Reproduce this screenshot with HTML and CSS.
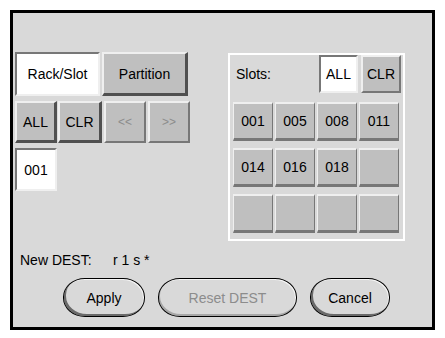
FILE: index.html
```html
<!DOCTYPE html>
<html lang="en">

<head>
    <meta charset="UTF-8" />
    <title>DEST Selection</title>
    <link rel="stylesheet" href="styles.css">
</head>

<body>

    <div class="frame">
        <div class="main">

            <div class="left">
                <div class="row">
                    <button class="btn sel wide">Rack/Slot</button>
                    <button class="btn strong wide2">Partition</button>
                </div>
                <div class="row row2">
                    <button class="btn strong sq">ALL</button>
                    <button class="btn strong sq2">CLR</button>
                    <button class="btn dim sq">&lt;&lt;</button>
                    <button class="btn dim sq">&gt;&gt;</button>
                </div>
                <div class="row row3">
                    <button class="btn sel rack">001</button>
                </div>
            </div>

            <div class="panel">
                <div class="panel-head">
                    <span class="slots-label">Slots:</span>
                    <button class="btn sel cell-h">ALL</button>
                    <button class="btn cell-h">CLR</button>
                </div>
                <div class="slot-grid">
                    <button class="btn cell">001</button>
                    <button class="btn cell">005</button>
                    <button class="btn cell">008</button>
                    <button class="btn cell">011</button>
                    <button class="btn cell">014</button>
                    <button class="btn cell">016</button>
                    <button class="btn cell">018</button>
                    <button class="btn cell"></button>
                    <button class="btn cell"></button>
                    <button class="btn cell"></button>
                    <button class="btn cell"></button>
                    <button class="btn cell"></button>
                </div>
            </div>

        </div>

        <div class="dest">
            <span class="dest-label">New DEST:</span>
            <span class="dest-value">r 1 s *</span>
        </div>

        <div class="actions">
            <button class="pill apply">Apply</button>
            <button class="pill reset" disabled>Reset DEST</button>
            <button class="pill cancel">Cancel</button>
        </div>
    </div>

</body>

</html>
```

FILE: styles.css
```css
:root {
    --bg: #d9d9d9;
    --face: #bfbfbf;
    --hi: #efefef;
    --lo: #777777;
    --lo-strong: #505050;
}

* {
    box-sizing: border-box
}

body {
    margin: 0;
    background: #fff;
    font-family: "Liberation Sans", Arial, sans-serif;
    font-size: 14px;
    color: #000;
}

.frame {
    margin: 10px;
    width: 425px;
    height: 320px;
    border: 3px solid #000;
    background: var(--bg);
    padding: 39px 0 0 2px;
}

.main {
    display: flex;
    align-items: flex-start;
}

.left {
    width: 213px;
}

.row {
    display: flex;
    gap: 1px;
}

.row2 {
    margin-top: 5px;
}

.row3 {
    margin-top: 5px;
}

/* ---------- motif-ish buttons ---------- */
.btn {
    font: inherit;
    color: #000;
    background: var(--face);
    border-style: solid;
    border-width: 2px;
    border-color: var(--hi) var(--lo) var(--lo) var(--hi);
    padding: 0;
    margin: 0;
}

.btn.strong {
    border-width: 2px 3px 3px 2px;
    border-color: var(--hi) var(--lo-strong) var(--lo-strong) var(--hi);
}

.btn.sel {
    background: #fff;
    border-color: var(--lo) var(--hi) var(--hi) var(--lo);
}

.btn.dim {
    color: #8c8c8c;
    font-size: 12px;
}

.wide {
    width: 85px;
    height: 44px;
}

.wide2 {
    width: 86px;
    height: 44px;
    margin-left: 1px;
}

.sq {
    width: 42px;
    height: 42px;
}

.sq2 {
    width: 44px;
    height: 42px;
}

.row2 .dim {
    margin-left: 1px;
}

.rack {
    width: 42px;
    height: 43px;
}

/* ---------- slots panel ---------- */
.panel {
    width: 177px;
    height: 188px;
    margin-top: 1px;
    border: 2px solid #fff;
    padding: 0 0 0 3px;
}

.panel-head {
    display: flex;
    align-items: center;
    gap: 3px;
    height: 38px;
    padding-right: 2px;
}

.slots-label {
    margin-left: 3px;
    flex: 1;
}

.cell-h {
    width: 40px;
    height: 38px;
}

.panel-head .btn.sel {
    width: 39px;
}

.slot-grid {
    display: grid;
    grid-template-columns: repeat(4, 40px);
    grid-auto-rows: 39px;
    column-gap: 2px;
    row-gap: 7px;
    margin-top: 9px;
}

.cell {
    border-width: 2px 1px 3px 1px;
    border-color: var(--hi) var(--lo) var(--lo) var(--hi);
}

/* ---------- bottom ---------- */
.dest {
    display: flex;
    margin: 11px 0 0 5px;
    height: 16px;
    align-items: center;
}

.dest-label {
    width: 93px;
}

.actions {
    display: flex;
    margin: 10px 0 0 48px;
    gap: 13px;
}

.pill {
    font: inherit;
    height: 39px;
    border: 1px solid #000;
    border-radius: 22px / 19px;
    background: var(--bg);
    color: #000;
    box-shadow: inset 2px -2px 0 #6a6a6a, inset -1px 1px 0 #f4f4f4;
}

.apply {
    width: 82px;
}

.reset {
    width: 139px;
    color: #8c8c8c;
    box-shadow: inset 1px -2px 0 #a8a8a8, inset -1px 1px 0 #f4f4f4;
}

.cancel {
    width: 80px;
}
```
